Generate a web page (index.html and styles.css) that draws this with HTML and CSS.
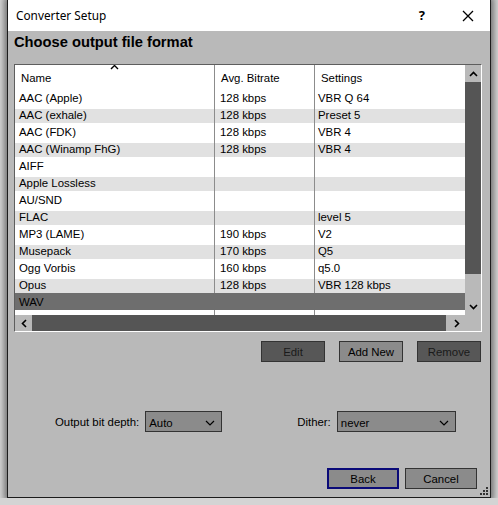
FILE: index.html
```html
<!DOCTYPE html>
<html lang="en">

<head>
    <meta charset="UTF-8">
    <title>Converter Setup</title>
    <link rel="stylesheet" href="styles.css">
</head>

<body>
    <div class="window">
        <div class="titlebar">
            <span class="title">Converter Setup</span>
            <span class="help">?</span>
            <svg class="close" width="12" height="12" viewBox="0 0 12 12">
                <path d="M1 1 L11 11 M11 1 L1 11" stroke="#000" stroke-width="1.3" fill="none"/>
            </svg>
        </div>

        <div class="content">
            <h1>Choose output file format</h1>

            <div class="listbox">
                <div class="list-main">
                    <div class="list-view">
                        <div class="list-head">
                            <div class="cell c-name">Name
                                <svg class="sort-arrow" width="9" height="6" viewBox="0 0 9 6">
                                    <polyline points="1,5 4.5,1.5 8,5" stroke="#000" stroke-width="1.4" fill="none"/>
                                </svg>
                            </div>
                            <div class="cell c-rate">Avg. Bitrate</div>
                            <div class="cell c-set">Settings</div>
                        </div>
                        <div class="row">
                            <div class="cell c-name">AAC (Apple)</div>
                            <div class="cell c-rate">128 kbps</div>
                            <div class="cell c-set">VBR Q 64</div>
                        </div>
                        <div class="row alt">
                            <div class="cell c-name">AAC (exhale)</div>
                            <div class="cell c-rate">128 kbps</div>
                            <div class="cell c-set">Preset 5</div>
                        </div>
                        <div class="row">
                            <div class="cell c-name">AAC (FDK)</div>
                            <div class="cell c-rate">128 kbps</div>
                            <div class="cell c-set">VBR 4</div>
                        </div>
                        <div class="row alt">
                            <div class="cell c-name">AAC (Winamp FhG)</div>
                            <div class="cell c-rate">128 kbps</div>
                            <div class="cell c-set">VBR 4</div>
                        </div>
                        <div class="row">
                            <div class="cell c-name">AIFF</div>
                            <div class="cell c-rate"></div>
                            <div class="cell c-set"></div>
                        </div>
                        <div class="row alt">
                            <div class="cell c-name">Apple Lossless</div>
                            <div class="cell c-rate"></div>
                            <div class="cell c-set"></div>
                        </div>
                        <div class="row">
                            <div class="cell c-name">AU/SND</div>
                            <div class="cell c-rate"></div>
                            <div class="cell c-set"></div>
                        </div>
                        <div class="row alt">
                            <div class="cell c-name">FLAC</div>
                            <div class="cell c-rate"></div>
                            <div class="cell c-set">level 5</div>
                        </div>
                        <div class="row">
                            <div class="cell c-name">MP3 (LAME)</div>
                            <div class="cell c-rate">190 kbps</div>
                            <div class="cell c-set">V2</div>
                        </div>
                        <div class="row alt">
                            <div class="cell c-name">Musepack</div>
                            <div class="cell c-rate">170 kbps</div>
                            <div class="cell c-set">Q5</div>
                        </div>
                        <div class="row">
                            <div class="cell c-name">Ogg Vorbis</div>
                            <div class="cell c-rate">160 kbps</div>
                            <div class="cell c-set">q5.0</div>
                        </div>
                        <div class="row alt">
                            <div class="cell c-name">Opus</div>
                            <div class="cell c-rate">128 kbps</div>
                            <div class="cell c-set">VBR 128 kbps</div>
                        </div>
                        <div class="row sel">
                            <div class="cell c-name">WAV</div>
                            <div class="cell c-rate"></div>
                            <div class="cell c-set"></div>
                        </div>
                        <div class="row filler">
                            <div class="cell c-name"></div>
                            <div class="cell c-rate"></div>
                            <div class="cell c-set"></div>
                        </div>
                    </div>

                    <div class="vscroll">
                        <div class="sb-btn">
                            <svg width="9" height="6" viewBox="0 0 9 6"><polyline points="1,5 4.5,1.5 8,5" stroke="#000" stroke-width="1.6" fill="none"/></svg>
                        </div>
                        <div class="v-thumb"></div>
                        <div class="sb-track"></div>
                        <div class="sb-btn">
                            <svg width="9" height="6" viewBox="0 0 9 6"><polyline points="1,1 4.5,4.5 8,1" stroke="#000" stroke-width="1.6" fill="none"/></svg>
                        </div>
                    </div>
                </div>

                <div class="list-bottom">
                    <div class="hscroll">
                        <div class="sb-btn">
                            <svg width="6" height="9" viewBox="0 0 6 9"><polyline points="5,1 1.5,4.5 5,8" stroke="#000" stroke-width="1.6" fill="none"/></svg>
                        </div>
                        <div class="h-thumb"></div>
                        <div class="sb-track"></div>
                        <div class="sb-btn">
                            <svg width="6" height="9" viewBox="0 0 6 9"><polyline points="1,1 4.5,4.5 1,8" stroke="#000" stroke-width="1.6" fill="none"/></svg>
                        </div>
                    </div>
                    <div class="corner"></div>
                </div>
            </div>

            <div class="list-buttons">
                <button class="btn disabled">Edit</button>
                <button class="btn">Add New</button>
                <button class="btn disabled">Remove</button>
            </div>

            <div class="options">
                <label class="opt-label">Output bit depth:</label>
                <div class="combo combo-depth">
                    <span>Auto</span>
                    <svg width="10" height="6" viewBox="0 0 10 6"><polyline points="1,1 5,5 9,1" stroke="#000" stroke-width="1.2" fill="none"/></svg>
                </div>
                <label class="opt-label dither-label">Dither:</label>
                <div class="combo combo-dither">
                    <span>never</span>
                    <svg width="10" height="6" viewBox="0 0 10 6"><polyline points="1,1 5,5 9,1" stroke="#000" stroke-width="1.2" fill="none"/></svg>
                </div>
            </div>

            <div class="footer">
                <button class="btn default">Back</button>
                <button class="btn">Cancel</button>
            </div>
        </div>

        <svg class="grip" width="10" height="9" viewBox="0 0 10 9">
            <rect x="7" y="0" width="2" height="2" fill="#333"/>
            <rect x="4" y="3" width="2" height="2" fill="#333"/>
            <rect x="7" y="3" width="2" height="2" fill="#333"/>
            <rect x="1" y="6" width="2" height="2" fill="#333"/>
            <rect x="4" y="6" width="2" height="2" fill="#333"/>
            <rect x="7" y="6" width="2" height="2" fill="#333"/>
        </svg>
    </div>
</body>

</html>
```

FILE: styles.css
```css
body {
    margin: 0;
    background: #d4d4d4;
    font-family: "Liberation Sans", Arial, sans-serif;
    font-size: 11.4px;
    color: #000;
}

.window {
    position: relative;
    margin-left: 7px;
    width: 482px;
    height: 497px;
    border: 1px solid #1c1c1c;
    border-top: none;
    background: #b9b9b9;
    box-shadow: 0 0 6px 3px rgba(0, 0, 0, 0.45);
    display: flex;
    flex-direction: column;
}

.titlebar {
    height: 31px;
    background: #fff;
    display: flex;
    align-items: center;
    padding-left: 8px;
}

.title {
    font-family: "Noto Sans", sans-serif;
    font-size: 11.8px;
    flex: 1;
    padding-bottom: 1px;
}

.help {
    font-family: "Noto Sans", sans-serif;
    font-size: 13px;
    font-weight: bold;
    margin-right: 37px;
    padding-bottom: 2px;
}

.close {
    margin-right: 16px;
}

.content {
    flex: 1;
    display: flex;
    flex-direction: column;
    padding: 2px 8px 8px 6px;
}

h1 {
    margin: 0 0 13px;
    font-size: 14.7px;
    line-height: 18px;
    font-weight: bold;
}

/* list view */

.listbox {
    width: 466px;
    height: 266px;
    border: 1px solid #fff;
    border-top-color: #5e5e5e;
    border-left-color: #5e5e5e;
    background: #fff;
}

.list-main {
    display: flex;
    height: 250px;
}

.list-view {
    width: 450px;
    overflow: hidden;
}

.list-head,
.row {
    display: flex;
    white-space: nowrap;
}

.list-head {
    height: 24px;
    align-items: center;
}

.list-head .cell {
    height: 24px;
    line-height: 24px;
    padding-left: 6px;
    padding-top: 1px;
}

.cell {
    flex: none;
    border-right: 1px solid #8c8c8c;
    box-sizing: border-box;
}

.c-name {
    position: relative;
    width: 200px;
    padding-left: 4px;
}

.c-rate {
    width: 100px;
    padding-left: 5px;
}

.c-set {
    width: 170px;
    padding-left: 3px;
}

.sort-arrow {
    position: absolute;
    left: 95px;
    top: -1px;
}

.row {
    height: 17px;
}

.row .cell {
    height: 17px;
    line-height: 15px;
    padding-top: 2px;
}

.row.alt {
    background: linear-gradient(#fff 0 3px, #e1e1e1 3px);
}

.row.sel {
    background: #6e6e6e;
}

.row.sel .cell {
    border-right-color: transparent;
}

.row.filler,
.row.filler .cell {
    height: 5px;
}

/* scroll bars */

.vscroll {
    width: 16px;
    display: flex;
    flex-direction: column;
    background: #b9b9b9;
}

.sb-btn {
    flex: none;
    width: 16px;
    height: 17px;
    display: flex;
    align-items: center;
    justify-content: center;
}

.sb-track {
    flex: 1;
}

.v-thumb {
    height: 192px;
    background: #555;
}

.list-bottom {
    display: flex;
    height: 16px;
}

.hscroll {
    width: 450px;
    display: flex;
    background: #b9b9b9;
}

.hscroll .sb-btn {
    width: 17px;
    height: 16px;
}

.h-thumb {
    width: 414px;
    background: #555;
}

.corner {
    width: 16px;
    background: #b9b9b9;
}

/* buttons */

.btn {
    font-family: "Liberation Sans", Arial, sans-serif;
    font-size: 11.4px;
    height: 21px;
    width: 64px;
    padding: 0;
    border: 1px solid #333;
    background: #8b8b8b;
    color: #000;
}

.btn.disabled {
    background: #575757;
    color: #1a1a1a;
}

.btn.default {
    border: 2px solid #0a0a78;
}

.list-buttons {
    display: flex;
    justify-content: flex-end;
    gap: 14px;
    margin-top: 9px;
    margin-right: 1px;
}

.options {
    display: flex;
    align-items: center;
    margin-top: 49px;
    padding-left: 41px;
}

.opt-label {
    margin-right: 6px;
}

.dither-label {
    margin-left: 75px;
}

.combo {
    height: 21px;
    box-sizing: border-box;
    border: 1px solid #333;
    background: #8b8b8b;
    display: flex;
    align-items: center;
    justify-content: space-between;
    padding: 2px 6px 0 3px;
}

.combo-depth {
    width: 77px;
}

.combo-dither {
    width: 119px;
}

.footer {
    display: flex;
    justify-content: flex-end;
    gap: 6px;
    margin-top: 36px;
    margin-right: 5px;
}

.footer .btn {
    width: 72px;
}

.grip {
    position: absolute;
    right: 1px;
    bottom: 1px;
}
```
